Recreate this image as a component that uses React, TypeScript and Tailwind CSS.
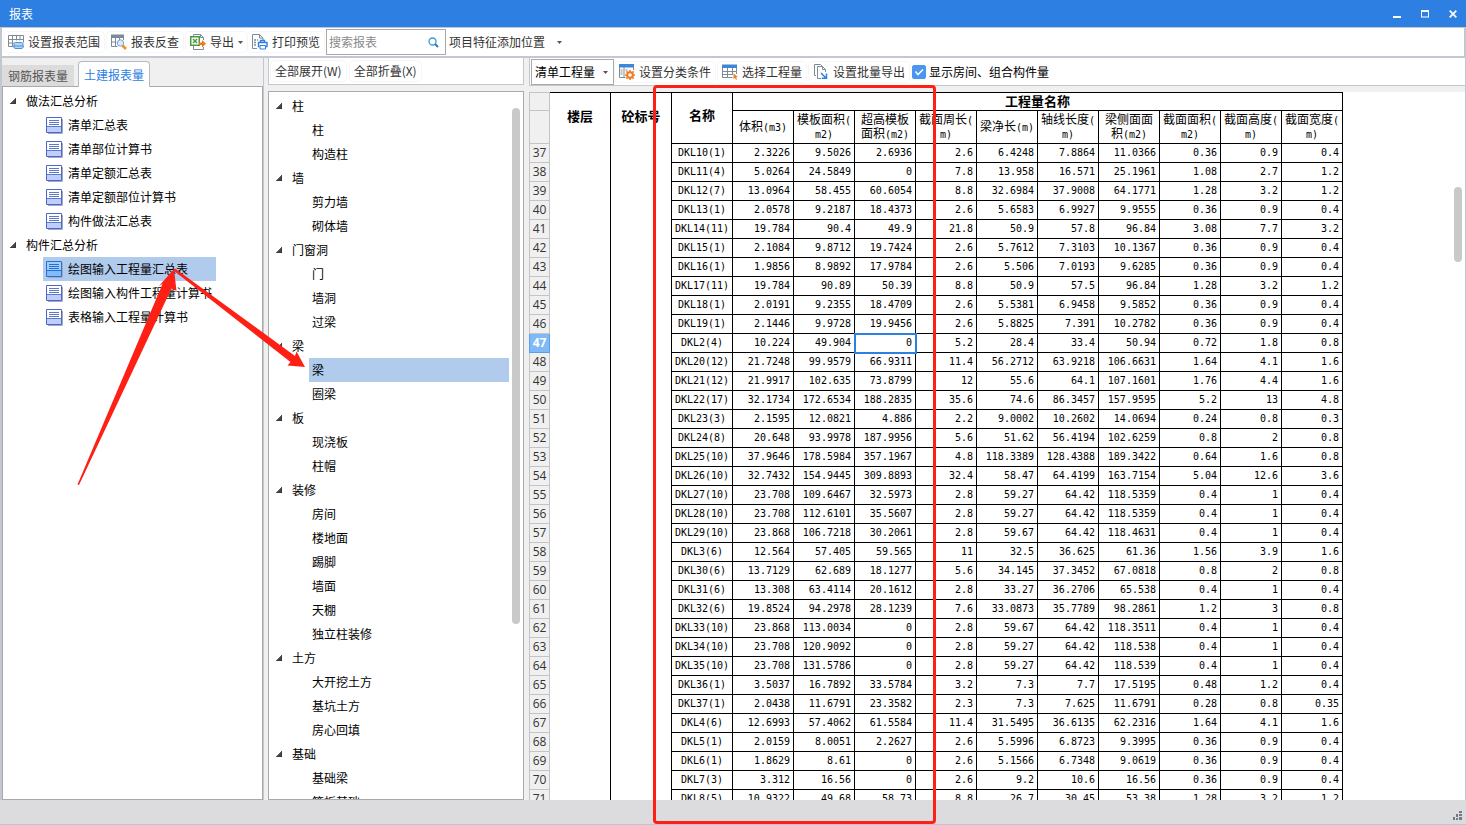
import { useState } from 'react';
import type { ReactNode } from 'react';
import clsx from 'clsx';

const REPORT_GROUPS = [
  {
    name: '做法汇总分析',
    items: ['清单汇总表', '清单部位计算书', '清单定额汇总表', '清单定额部位计算书', '构件做法汇总表'],
  },
  {
    name: '构件汇总分析',
    items: ['绘图输入工程量汇总表', '绘图输入构件工程量计算书', '表格输入工程量计算书'],
  },
];

const COMPONENT_GROUPS = [
  { name: '柱', items: ['柱', '构造柱'] },
  { name: '墙', items: ['剪力墙', '砌体墙'] },
  { name: '门窗洞', items: ['门', '墙洞', '过梁'] },
  { name: '梁', items: ['梁', '圈梁'] },
  { name: '板', items: ['现浇板', '柱帽'] },
  { name: '装修', items: ['房间', '楼地面', '踢脚', '墙面', '天棚', '独立柱装修'] },
  { name: '土方', items: ['大开挖土方', '基坑土方', '房心回填'] },
  { name: '基础', items: ['基础梁', '筏板基础'] },
];

// [text, unit] pairs per line
const COLUMNS: [string, string][][] = [
  [['体积', '(m3)']],
  [['模板面积', '('], ['', 'm2)']],
  [['超高模板', ''], ['面积', '(m2)']],
  [['截面周长', '('], ['', 'm)']],
  [['梁净长', '(m)']],
  [['轴线长度', '('], ['', 'm)']],
  [['梁侧面面', ''], ['积', '(m2)']],
  [['截面面积', '('], ['', 'm2)']],
  [['截面高度', '('], ['', 'm)']],
  [['截面宽度', '('], ['', 'm)']],
];

const FIRST_ROW = 37;
const ROWS = [
  'DKL10(1) 2.3226 9.5026 2.6936 2.6 6.4248 7.8864 11.0366 0.36 0.9 0.4',
  'DKL11(4) 5.0264 24.5849 0 7.8 13.958 16.571 25.1961 1.08 2.7 1.2',
  'DKL12(7) 13.0964 58.455 60.6054 8.8 32.6984 37.9008 64.1771 1.28 3.2 1.2',
  'DKL13(1) 2.0578 9.2187 18.4373 2.6 5.6583 6.9927 9.9555 0.36 0.9 0.4',
  'DKL14(11) 19.784 90.4 49.9 21.8 50.9 57.8 96.84 3.08 7.7 3.2',
  'DKL15(1) 2.1084 9.8712 19.7424 2.6 5.7612 7.3103 10.1367 0.36 0.9 0.4',
  'DKL16(1) 1.9856 8.9892 17.9784 2.6 5.506 7.0193 9.6285 0.36 0.9 0.4',
  'DKL17(11) 19.784 90.89 50.39 8.8 50.9 57.5 96.84 1.28 3.2 1.2',
  'DKL18(1) 2.0191 9.2355 18.4709 2.6 5.5381 6.9458 9.5852 0.36 0.9 0.4',
  'DKL19(1) 2.1446 9.9728 19.9456 2.6 5.8825 7.391 10.2782 0.36 0.9 0.4',
  'DKL2(4) 10.224 49.904 0 5.2 28.4 33.4 50.94 0.72 1.8 0.8',
  'DKL20(12) 21.7248 99.9579 66.9311 11.4 56.2712 63.9218 106.6631 1.64 4.1 1.6',
  'DKL21(12) 21.9917 102.635 73.8799 12 55.6 64.1 107.1601 1.76 4.4 1.6',
  'DKL22(17) 32.1734 172.6534 188.2835 35.6 74.6 86.3457 157.9595 5.2 13 4.8',
  'DKL23(3) 2.1595 12.0821 4.886 2.2 9.0002 10.2602 14.0694 0.24 0.8 0.3',
  'DKL24(8) 20.648 93.9978 187.9956 5.6 51.62 56.4194 102.6259 0.8 2 0.8',
  'DKL25(10) 37.9646 178.5984 357.1967 4.8 118.3389 128.4388 189.3422 0.64 1.6 0.8',
  'DKL26(10) 32.7432 154.9445 309.8893 32.4 58.47 64.4199 163.7154 5.04 12.6 3.6',
  'DKL27(10) 23.708 109.6467 32.5973 2.8 59.27 64.42 118.5359 0.4 1 0.4',
  'DKL28(10) 23.708 112.6101 35.5607 2.8 59.27 64.42 118.5359 0.4 1 0.4',
  'DKL29(10) 23.868 106.7218 30.2061 2.8 59.67 64.42 118.4631 0.4 1 0.4',
  'DKL3(6) 12.564 57.405 59.565 11 32.5 36.625 61.36 1.56 3.9 1.6',
  'DKL30(6) 13.7129 62.689 18.1277 5.6 34.145 37.3452 67.0818 0.8 2 0.8',
  'DKL31(6) 13.308 63.4114 20.1612 2.8 33.27 36.2706 65.538 0.4 1 0.4',
  'DKL32(6) 19.8524 94.2978 28.1239 7.6 33.0873 35.7789 98.2861 1.2 3 0.8',
  'DKL33(10) 23.868 113.0034 0 2.8 59.67 64.42 118.3511 0.4 1 0.4',
  'DKL34(10) 23.708 120.9092 0 2.8 59.27 64.42 118.538 0.4 1 0.4',
  'DKL35(10) 23.708 131.5786 0 2.8 59.27 64.42 118.539 0.4 1 0.4',
  'DKL36(1) 3.5037 16.7892 33.5784 3.2 7.3 7.7 17.5195 0.48 1.2 0.4',
  'DKL37(1) 2.0438 11.6791 23.3582 2.3 7.3 7.625 11.6791 0.28 0.8 0.35',
  'DKL4(6) 12.6993 57.4062 61.5584 11.4 31.5495 36.6135 62.2316 1.64 4.1 1.6',
  'DKL5(1) 2.0159 8.0051 2.2627 2.6 5.5996 6.8723 9.3995 0.36 0.9 0.4',
  'DKL6(1) 1.8629 8.61 0 2.6 5.1566 6.7348 9.0619 0.36 0.9 0.4',
  'DKL7(3) 3.312 16.56 0 2.6 9.2 10.6 16.56 0.36 0.9 0.4',
  'DKL8(5) 10.9322 49.68 58.73 8.8 26.7 30.45 53.38 1.28 3.2 1.2',
].map((r) => r.split(' '));

function GridIcon() {
  return (
    <svg width="16" height="16" viewBox="0 0 16 16" fill="none">
      <path d="M.5 1.5h15v7M.5 1.5v11h5M.5 5.5h15M.5 9h5M4.5 1.5v11M8.5 1.5v5M12 1.5v5" stroke="#7d8b96" />
      <rect x="6" y="8.5" width="9" height="4" rx="1.5" fill="#b5d6f7" stroke="#4a90d9" />
      <path d="M5.5 12h10c0 1.6-1 2.5-2.5 2.5h-5c-1.5 0-2.5-.9-2.5-2.5z" fill="#b5d6f7" stroke="#4a90d9" />
    </svg>
  );
}

function LookupIcon() {
  return (
    <svg width="16" height="16" viewBox="0 0 16 16" fill="none">
      <path d="M0 .5h13V4H0z" fill="#7d8b96" />
      <path d="M.5 4v8.5h6M.5 8h5M4.5 4v8.5M8.5 4v2M12.5 4v2" stroke="#7d8b96" />
      <circle cx="9.5" cy="9" r="3.2" fill="#dbe9ff" stroke="#7aa0dc" />
      <path d="m11.5 11.5 3.500 3.500" stroke="#f0921e" strokeWidth="2.6" />
    </svg>
  );
}

function ExportIcon() {
  return (
    <svg width="16" height="16" viewBox="0 0 16 16" fill="none">
      <path d="M3.5 2.500V.5h7l3 3V6M3.5 12v3.500h10V13M10.5.5v3h3" stroke="#7d8b96" />
      <rect x=".75" y="2.75" width="8.5" height="8.5" fill="#fff" stroke="#4d9b3c" strokeWidth="1.5" />
      <path d="m3 5 4 4M7 5 3 9" stroke="#4d9b3c" strokeWidth="1.5" />
      <path d="M9 8.500h3V6l4 3.800-4 3.700v-2.500H9z" fill="#f07a22" />
    </svg>
  );
}

function PrintIcon() {
  return (
    <svg width="16" height="16" viewBox="0 0 16 16" fill="none">
      <path d="M5 14.5H.5V.5h7L11 4v2M7.5.5V4H11" stroke="#7d8b96" />
      <path d="M2 6h2M5 6h1M2 8.5h2M2 11h2" stroke="#7d8b96" strokeWidth="1.4" />
      <path d="M8.5 8.5v-2h4v2M7.5 12.5h-1v-4H15v4h-1" stroke="#2d80e2" strokeWidth="1.4" />
      <path d="M8 11.500h5.500V15H8z" fill="#fff" stroke="#2d80e2" />
    </svg>
  );
}

function ClassifyIcon() {
  return (
    <svg width="16" height="16" viewBox="0 0 16 16" fill="none">
      <path d="M.5 2.5v11h6M14.5 3v3M5 3v10" stroke="#7d8b96" />
      <path d="M0 0h15v3.500H0z" fill="#3f86d8" />
      <path d="M1.5 6h2M1.5 8h2M1.5 10h2M6.5 6h2" stroke="#7d8b96" />
      <circle cx="11" cy="11" r="2.8" stroke="#f07a22" strokeWidth="2" />
      <path
        d="M11 6v2M11 14v2M6 11h2M14 11h2M7.400 7.400l1.200 1.200M13.400 13.400l1.200 1.200M14.600 7.400l-1.200 1.200M7.400 14.600l1.200-1.200"
        stroke="#f07a22"
        strokeWidth="1.6"
      />
    </svg>
  );
}

function PickIcon() {
  return (
    <svg width="16" height="16" viewBox="0 0 16 16" fill="none">
      <path d="M.5 4v9.500h10M14.5 4v6M.5 7.500h14M.5 10.500h10M5.5 4v9.500M10.5 4v7" stroke="#7d8b96" />
      <path d="M0 .5h15V4H0z" fill="#3f86d8" />
      <path d="m11.500 9.500 4.500 3.500-2 .3 1 2-1 .4-1-2-1.500 1.300z" fill="#f07a22" />
    </svg>
  );
}

function BatchIcon() {
  return (
    <svg width="16" height="16" viewBox="0 0 16 16" fill="none">
      <path d="M3 11.500H1.500V.5h6l2 2" stroke="#7d8b96" />
      <path d="M8 14.500H4.500v-12h5l3 3V8M9.500 2.500v3h3" stroke="#7d8b96" fill="#fff" />
      <path d="m8 9 5 5M13.500 9.500v4.800H8.700" stroke="#2d80e2" strokeWidth="1.5" />
    </svg>
  );
}

function SheetIcon({ active }: { active?: boolean }) {
  return (
    <svg width="17" height="17" viewBox="0 0 17 17" fill="none" className="shrink-0">
      <path d="M2 16.500h14.500V2" stroke="#a4abba" />
      <path d="M.5.5h15v15H.5z" fill={active ? '#9fd0ff' : '#fff'} stroke={active ? '#2a6fd0' : '#4a68c4'} />
      <path d="M1 10h14v5H1z" fill={active ? '#7fbcff' : '#c0ceff'} />
      <path d="M3 3.500h10M3 5.500h10M3 7.500h10M1 9.500h14" stroke={active ? '#2a6fd0' : '#5c7ccb'} />
    </svg>
  );
}

function Caret({ className }: { className?: string }) {
  return (
    <svg width="5" height="3" viewBox="0 0 5 3" className={className}>
      <path d="M0 0h5L2.500 3z" fill="#555" />
    </svg>
  );
}

function ToolButton({ icon, children }: { icon?: ReactNode; children: ReactNode }) {
  return (
    <button className="flex h-5 items-center gap-1 rounded-sm px-1 whitespace-nowrap text-[#333] ring-1 ring-[#f6f6f6]">
      {icon}
      {children}
    </button>
  );
}

function GroupRow({ name }: { name: string }) {
  return (
    <div className="flex h-6 items-center gap-2.5 pl-[7px]">
      <svg width="6" height="6" viewBox="0 0 6 6">
        <path d="M6 0v6H0z" fill="#444" stroke="#222" strokeWidth=".5" />
      </svg>
      {name}
    </div>
  );
}

function HeadLines({ lines }: { lines: [string, string][] }) {
  return (
    <>
      {lines.map(([text, unit], i) => (
        <div key={i} className="h-3.5 leading-[14px]">
          {text}
          <span className="text-[10px]">{unit}</span>
        </div>
      ))}
    </>
  );
}

export default function App() {
  const [report, setReport] = useState('绘图输入工程量汇总表');
  const [component, setComponent] = useState('梁/梁');
  const [showRooms, setShowRooms] = useState(true);

  return (
    <div className="relative flex h-screen flex-col overflow-hidden border-b border-[#bcc5d4] bg-[#f0f0f0] font-['Noto_Sans_CJK_SC',sans-serif] text-xs text-black">
      <header className="flex h-[27px] shrink-0 items-center justify-between bg-[#2d80e2] px-[9px] text-white">
        <h1>报表</h1>
        <div className="flex gap-5">
          <button aria-label="最小化">
            <svg width="8" height="8" viewBox="0 0 8 8"><path d="M0 6h8v2H0z" fill="#fff" /></svg>
          </button>
          <button aria-label="最大化">
            <svg width="8" height="8" viewBox="0 0 8 8"><path d="M0 0h8v7.500H0zM1 2v4.500h6V2z" fill="#fff" fillRule="evenodd" /></svg>
          </button>
          <button aria-label="关闭">
            <svg width="8" height="8" viewBox="0 0 8 8"><path d="m.7.7 6.600 6.600M7.300.7.7 7.300" stroke="#fff" strokeWidth="1.7" /></svg>
          </button>
        </div>
      </header>

      <div className="flex h-[31px] shrink-0 items-center border-x-2 border-t border-b-2 border-[#c3c8d0] bg-white pl-0.5">
        <div className="flex items-center gap-[3px]">
          <ToolButton icon={<GridIcon />}>设置报表范围</ToolButton>
          <ToolButton icon={<LookupIcon />}>报表反查</ToolButton>
          <ToolButton icon={<ExportIcon />}>
            导出
            <Caret />
          </ToolButton>
        </div>
        <div className="ml-px flex">
          <ToolButton icon={<PrintIcon />}>打印预览</ToolButton>
        </div>
        <label className="ml-0.5 flex h-[26px] w-[120px] items-center border border-[#aaa] pr-1.5 pl-0.5">
          <input placeholder="搜索报表" aria-label="搜索报表" className="w-full min-w-0 outline-none placeholder:text-[#8a8a8a]" />
          <svg width="11" height="11" viewBox="0 0 11 11" fill="none" className="shrink-0">
            <circle cx="4.5" cy="4.5" r="3.5" stroke="#3a9bd8" strokeWidth="1.3" />
            <path d="m7 7 3 3" stroke="#2a7cc0" strokeWidth="2" />
          </svg>
        </label>
        <button className="flex h-5 items-center gap-3 px-[3px] whitespace-nowrap text-[#333]">
          项目特征添加位置
          <Caret />
        </button>
      </div>

      <main className="flex min-h-0 flex-1 border-l-2 border-[#c3c8d0]">
        <section className="flex w-[262px] shrink-0 flex-col border-r border-[#c3c8d0]">
          <div className="flex h-[28px] shrink-0 items-end gap-1">
            <button className="h-[21px] w-[72px] bg-[#dcdcdc] text-[#555]">钢筋报表量</button>
            <button className="relative -mb-px h-[26px] w-[72px] rounded-t-sm border border-b-0 border-[#b5bac2] bg-white text-[#2d80e2]">
              土建报表量
            </button>
          </div>
          <div className="min-h-0 flex-1 overflow-hidden border border-[#aaa] bg-white pt-0.5">
            {REPORT_GROUPS.map((g) => (
              <div key={g.name}>
                <GroupRow name={g.name} />
                {g.items.map((item) => (
                  <button
                    key={item}
                    onClick={() => setReport(item)}
                    className={clsx(
                      'ml-10 flex h-6 w-[173px] items-center gap-[5px] pl-[3px] whitespace-nowrap',
                      item === report && 'bg-[#b1cbed]',
                    )}
                  >
                    <SheetIcon active={item === report} />
                    {item}
                  </button>
                ))}
              </div>
            ))}
          </div>
        </section>

        <section className="ml-1 flex w-64 shrink-0 flex-col gap-1.5">
          <div className="flex h-[27px] shrink-0 items-center gap-1 border border-t-0 border-[#c3c8d0] bg-white pl-0.5">
            <ToolButton>全部展开(W)</ToolButton>
            <ToolButton>全部折叠(X)</ToolButton>
          </div>
          <div className="flex min-h-0 flex-1 border border-[#aaa] bg-white">
            <div className="flex-1 overflow-hidden pt-0.5">
              {COMPONENT_GROUPS.map((g) => (
                <div key={g.name}>
                  <GroupRow name={g.name} />
                  {g.items.map((item) => {
                    const id = `${g.name}/${item}`;
                    return (
                      <button
                        key={id}
                        onClick={() => setComponent(id)}
                        className={clsx('ml-10 flex h-6 w-[200px] items-center pl-[3px]', id === component && 'bg-[#b1cbed]')}
                      >
                        {item}
                      </button>
                    );
                  })}
                </div>
              ))}
            </div>
            <div className="mt-4 mr-[3px] h-[516px] w-2 shrink-0 rounded-full bg-[#c9c9c9]" />
          </div>
        </section>

        <section className="ml-[5px] flex min-w-0 flex-1 flex-col border-r border-[#c3c8d0]">
          <div className="flex h-7 shrink-0 items-center border-b border-l border-[#c3c8d0] bg-white pl-px">
            <div className="relative">
              <select aria-label="工程量类型" className="h-[26px] w-[83px] appearance-none border border-[#aaa] bg-white pl-[3px] outline-none">
                <option>清单工程量</option>
              </select>
              <Caret className="pointer-events-none absolute top-3 right-1.5" />
            </div>
            <div className="ml-px flex gap-[3px]">
              <ToolButton icon={<ClassifyIcon />}>设置分类条件</ToolButton>
              <ToolButton icon={<PickIcon />}>选择工程量</ToolButton>
              <ToolButton icon={<BatchIcon />}>设置批量导出</ToolButton>
            </div>
            <label className="ml-[3px] flex items-center gap-[3px] whitespace-nowrap">
              <span className="relative flex">
                <input
                  type="checkbox"
                  checked={showRooms}
                  onChange={(e) => setShowRooms(e.target.checked)}
                  className="peer size-3.5 appearance-none rounded-xs border border-[#4a96f0] checked:bg-[#4a96f0]"
                />
                <svg viewBox="0 0 14 14" fill="none" className="pointer-events-none absolute inset-0 hidden size-3.5 peer-checked:block">
                  <path d="m3.500 6.500 2.500 3 5-5" stroke="#fff" strokeWidth="1.6" />
                </svg>
              </span>
              显示房间、组合构件量
            </label>
          </div>

          <div className="mt-1.5 flex min-h-0 flex-1 overflow-hidden bg-white">
            <div className="min-w-0 flex-1 overflow-hidden">
              <table className="w-[814px] table-fixed border-separate border-spacing-0 font-['DejaVu_Sans_Mono','Noto_Sans_CJK_SC',monospace]">
                <colgroup>
                  <col className="w-[21px]" />
                  <col span={13} className="w-[61px]" />
                </colgroup>
                <thead>
                  <tr className="h-[19px] text-[13px] leading-4">
                    <th className="border border-[#c4c4c4] bg-[#f0f0f0]" />
                    <th rowSpan={2} className="border-t border-r border-black p-0 pb-1">楼层</th>
                    <th rowSpan={2} className="border-t border-r border-black p-0 pb-1">砼标号</th>
                    <th rowSpan={2} className="border-t border-r border-b border-black p-0 pb-1">名称</th>
                    <th colSpan={10} className="border-t border-r border-b border-black p-0">工程量名称</th>
                  </tr>
                  <tr className="h-[33px]">
                    <th className="border border-t-0 border-[#c4c4c4] bg-[#f0f0f0]" />
                    {COLUMNS.map((lines, i) => (
                      <th key={i} className="border-r border-b border-black p-0 font-normal whitespace-nowrap">
                        <HeadLines lines={lines} />
                      </th>
                    ))}
                  </tr>
                </thead>
                <tbody>
                  {ROWS.map(([name, ...values], r) => {
                    const current = name === 'DKL2(4)';
                    return (
                      <tr key={name} className="h-[19px] text-[10px] leading-4">
                        <th
                          className={clsx(
                            "border border-t-0 p-0 font-['Open_Sans',sans-serif] text-xs leading-4",
                            current
                              ? 'border-[#5a9fe8] bg-[#7fb9f7] font-bold text-white'
                              : 'border-[#c4c4c4] bg-[#f0f0f0] font-normal text-[#333]',
                          )}
                        >
                          {FIRST_ROW + r}
                        </th>
                        <td className="border-r border-black" />
                        <td className="border-r border-black" />
                        <td className="border-r border-b border-black p-0 text-center">{name}</td>
                        {values.map((v, c) => (
                          <td
                            key={c}
                            className={clsx(
                              'border-r border-b border-black p-0 pr-[3px] text-right',
                              current && c === 2 && 'outline-2 -outline-offset-1 outline-[#2d80e2]',
                            )}
                          >
                            {v}
                          </td>
                        ))}
                      </tr>
                    );
                  })}
                </tbody>
              </table>
            </div>
            <div className="mt-[95px] mr-[3px] h-[75px] w-2 shrink-0 rounded-full bg-[#c9c9c9]" />
          </div>
        </section>
      </main>

      <footer className="flex h-6 shrink-0 items-end justify-end bg-[#dcdcde] pr-1 pb-1">
        <svg width="9" height="9" viewBox="0 0 9 9" fill="#6f7a86">
          <path d="M6 0h3v2H6zM3 3h2v3H3zM6 3h3v2H6zM0 6h2v3H0zM3 7h2v2H3zM6 6h3v3H6z" />
        </svg>
      </footer>

      {/* review marks drawn over the window */}
      <div className="pointer-events-none absolute top-[85px] bottom-0 left-[653px] w-[283px] rounded-sm border-3 border-[#ff2015]" />
      <svg width="320" height="500" viewBox="0 0 320 500" fill="#ff2015" className="pointer-events-none absolute top-0 left-0">
        <path d="M77.500 484.500 162.500 284 159 286l15-17 2.500 22-5-2.500L79 485z" />
        <path d="m173.500 270.500 1.500-2 120 87.500 1.500-4.500L305 367l-17.500-1.500 3-3.500z" />
      </svg>
    </div>
  );
}
